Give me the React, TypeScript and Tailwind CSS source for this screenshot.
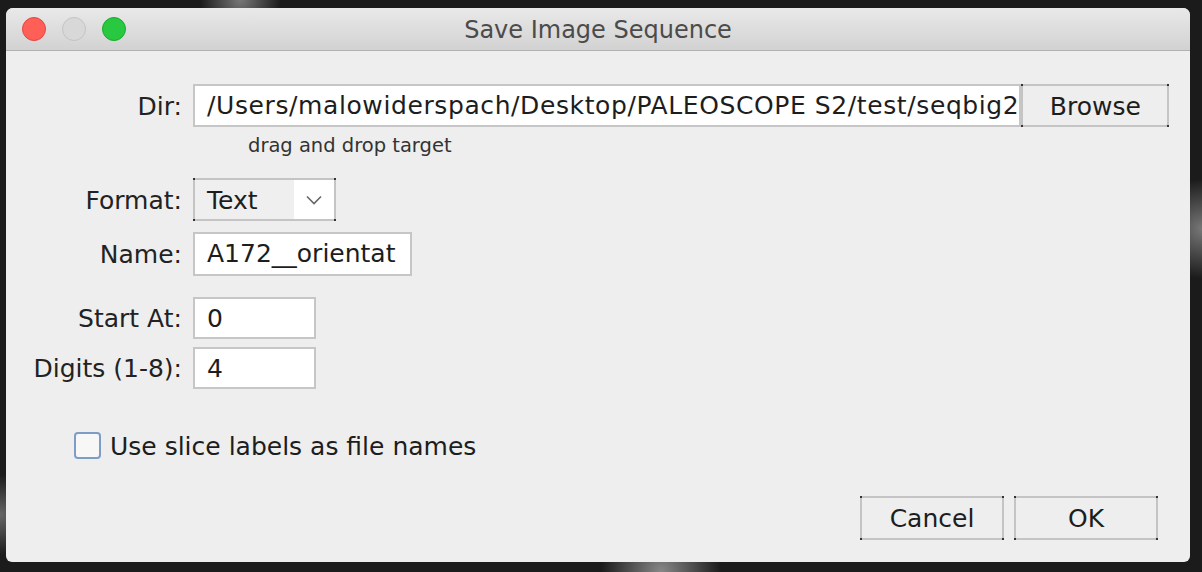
import React from "react";

const font = { fontFamily: '"DejaVu Sans", "Liberation Sans", sans-serif' };

function Label({ children }: { children: React.ReactNode }) {
  return <div className="w-[177px] shrink-0 pr-[1px] pt-[2px] text-right text-[25px] text-[#222]">{children}</div>;
}

function Field({ value, width }: { value: string; width: string }) {
  return (
    <div className={`${width} h-full overflow-hidden whitespace-nowrap border-2 border-[#c6c6c6] bg-white pl-[12px] pt-[1px] text-[25px] leading-[38px] text-[#1d1d1d]`}>
      {value}
    </div>
  );
}

function Corners() {
  return (
    <>
      <span className="absolute -left-[2px] -top-[2px] h-[2px] w-[2px] bg-[#333]" />
      <span className="absolute -right-[2px] -top-[2px] h-[2px] w-[2px] bg-[#333]" />
      <span className="absolute -bottom-[2px] -left-[2px] h-[2px] w-[2px] bg-[#333]" />
      <span className="absolute -bottom-[2px] -right-[2px] h-[2px] w-[2px] bg-[#333]" />
    </>
  );
}

function Button({ children, width }: { children: React.ReactNode; width: string }) {
  return (
    <div className={`${width} relative flex h-full items-center justify-center rounded-[3px] border-2 border-[#c4c4c4] bg-[#eeeeee] pt-[2px] text-[25px] text-[#1d1d1d]`}>
      <Corners />
      {children}
    </div>
  );
}

export default function App() {
  return (
    <div
      className="h-[572px] w-[1202px] overflow-hidden bg-[#1b1b1b] bg-[radial-gradient(circle_at_20%_0%,#777_0,transparent_40px),radial-gradient(circle_at_55%_100%,#888_0,transparent_60px),radial-gradient(circle_at_100%_40%,#777_0,transparent_50px),radial-gradient(circle_at_0%_90%,#666_0,transparent_40px)] pl-[6px] pt-[8px]"
      style={font}
    >
      <div className="flex h-[554px] w-[1184px] flex-col overflow-hidden rounded-t-[7px] rounded-b-[6px] bg-[#eeeeee]">
        {/* title bar */}
        <div className="relative flex h-[43px] shrink-0 items-center border-b border-[#b2b2b2] bg-gradient-to-b from-[#e9e9e9] to-[#d2d2d2]">
          <div className="flex gap-[16px] pl-[16px]">
            <span className="h-[24px] w-[24px] rounded-full border border-[#e2463f] bg-[#ff5f57]" />
            <span className="h-[24px] w-[24px] rounded-full border border-[#c4c4c4] bg-[#d8d8d8]" />
            <span className="h-[24px] w-[24px] rounded-full border border-[#1aab29] bg-[#28c840]" />
          </div>
          <div className="absolute inset-x-0 top-0 flex h-full items-center justify-center pt-[2px] text-[24px] text-[#4b4b4b]">
            Save Image Sequence
          </div>
        </div>

        {/* body */}
        <div className="flex flex-col pt-[33px]">
          <div className="flex h-[43px] items-center gap-[10px] pr-[22px]">
            <Label>Dir:</Label>
            <div className="flex h-full flex-1">
              <div className="h-full min-w-0 flex-1 overflow-hidden whitespace-nowrap border-2 border-[#c6c6c6] bg-white pl-[12px] pt-[1px] text-[25px] leading-[38px] tracking-[0.6px] text-[#1d1d1d]">
                /Users/malowiderspach/Desktop/PALEOSCOPE S2/test/seqbig2
              </div>
              <Button width="w-[148px]">Browse</Button>
            </div>
          </div>
          <div className="mt-[6px] h-[24px] pl-[242px] pt-[1px] text-[19.5px] leading-[24px] text-[#333]">drag and drop target</div>

          <div className="mt-[21px] flex h-[43px] items-center gap-[10px]">
            <Label>Format:</Label>
            <div className="relative flex h-full w-[143px] rounded-[3px] border-2 border-[#c4c4c4]">
              <div className="flex flex-1 items-center bg-[#efefef] pl-[12px] pt-[2px] text-[25px] text-[#1d1d1d]">Text</div>
              <div className="flex w-[40px] items-center justify-center bg-white">
                <svg width="16" height="10" viewBox="0 0 16 10">
                  <path d="M1 1.5 L8 8.5 L15 1.5" fill="none" stroke="#666" strokeWidth="1.6" />
                </svg>
              </div>
              <Corners />
            </div>
          </div>

          <div className="mt-[11px] flex h-[44px] items-center gap-[10px]">
            <Label>Name:</Label>
            <Field value="A172__orientat" width="w-[219px]" />
          </div>

          <div className="mt-[21px] flex h-[42px] items-center gap-[10px]">
            <Label>Start At:</Label>
            <Field value="0" width="w-[123px]" />
          </div>

          <div className="mt-[8px] flex h-[42px] items-center gap-[10px]">
            <Label>Digits (1-8):</Label>
            <Field value="4" width="w-[123px]" />
          </div>

          <div className="mt-[43px] flex h-[27px] items-center pl-[68px]">
            <span className="h-[27px] w-[27px] rounded-[4px] border-2 border-[#7d9dc4] bg-[#f7f7f7]" />
            <span className="pl-[9px] pt-[2px] text-[25px] text-[#1d1d1d]">Use slice labels as file names</span>
          </div>

          <div className="mt-[37px] flex h-[44px] justify-end gap-[10px] pr-[32px]">
            <Button width="w-[144px]">Cancel</Button>
            <Button width="w-[144px]">OK</Button>
          </div>
        </div>
      </div>
    </div>
  );
}
